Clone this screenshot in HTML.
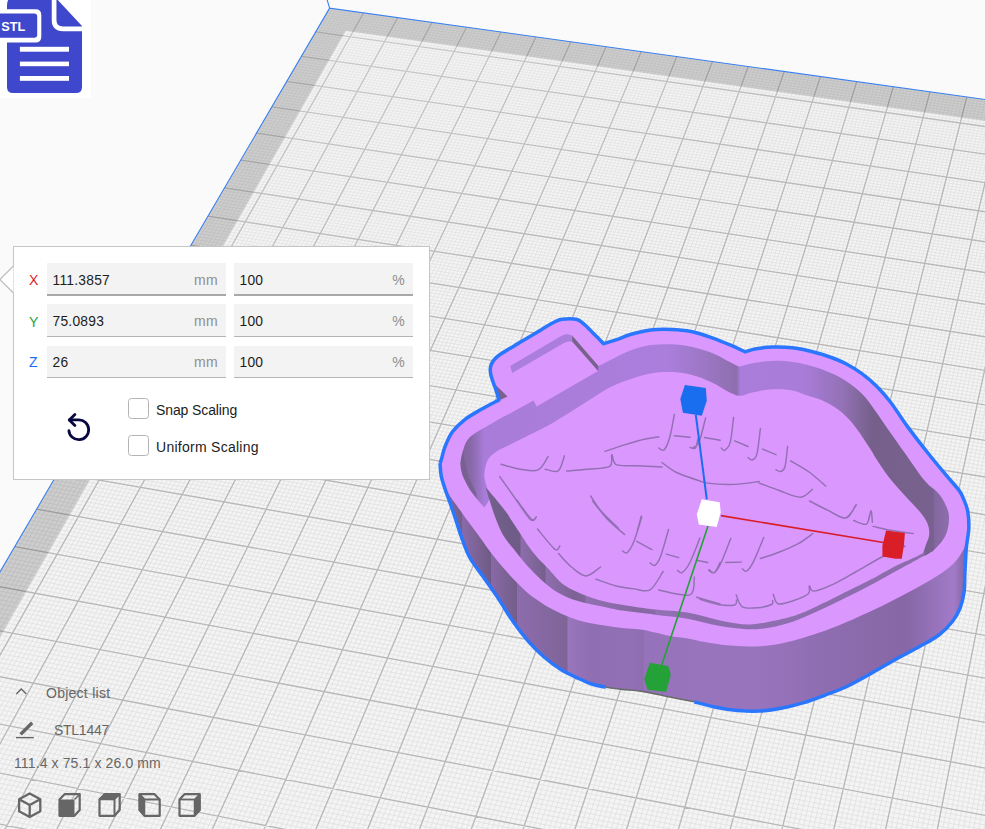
<!DOCTYPE html>
<html><head><meta charset="utf-8"><title>Scale tool</title>
<style>
*{box-sizing:border-box;margin:0;padding:0}
html,body{width:985px;height:829px;overflow:hidden;background:#fafafa}
body{position:relative;font-family:"Liberation Sans","DejaVu Sans",sans-serif;font-size:14px;color:#191919}
#scene{position:absolute;left:0;top:0}
#stl{position:absolute;left:0;top:0;width:91px;height:98px;background:#fff}
#panel{position:absolute;left:13px;top:246px;width:417px;height:234px;background:#fff;border:1px solid #c4c5c6}
#arrow{position:absolute;left:-1px;top:265px;z-index:2}
.fld{position:absolute;height:33px;background:#f3f3f3;border-bottom:1px solid #b4b4b4}
.fld.a{border-bottom:2px solid #a8a8a8}
.fld .v{position:absolute;left:5.5px;top:10px;font-size:13.8px;line-height:16px;letter-spacing:.25px;color:#1c1c1c}
.fld .u{position:absolute;right:8px;top:9px;line-height:16px;color:#8f8f8f;letter-spacing:.3px}
.ax{position:absolute;left:15px;line-height:16px;font-size:14px}
.cb{position:absolute;left:114px;width:21px;height:21px;border:1px solid #b4b4b4;border-radius:3.5px;background:#fff}
.cl{position:absolute;left:142px;line-height:16px;letter-spacing:.12px;color:#1c1c1c}
.sc{position:absolute;color:#666;line-height:16px;white-space:nowrap}
</style></head><body>
<svg id="scene" width="985" height="829" viewBox="0 0 985 829">
<defs><linearGradient id="gFade" gradientUnits="userSpaceOnUse" x1="0" y1="0" x2="120" y2="420"><stop offset="0" stop-color="#f4f4f4" stop-opacity="0.38"/><stop offset="1" stop-color="#f4f4f4" stop-opacity="0"/></linearGradient></defs>
<path d="M329.6 8.1L1424.1 160.8L1382.9 1486.8L-311 1103.8Z" fill="#f4f4f4"/>
<path d="M333 8.6L-305.9 1105M336.4 9.1L-300.9 1106.1M339.8 9.5L-295.9 1107.2M343.2 10L-290.8 1108.4M346.6 10.5L-285.8 1109.5M350 11L-280.8 1110.7M353.4 11.4L-275.7 1111.8M356.8 11.9L-270.7 1112.9M360.2 12.4L-265.6 1114.1M367 13.3L-255.5 1116.4M370.4 13.8L-250.4 1117.5M373.8 14.3L-245.3 1118.7M377.2 14.8L-240.3 1119.8M380.7 15.2L-235.2 1121M384.1 15.7L-230.1 1122.1M387.5 16.2L-225 1123.3M390.9 16.7L-219.9 1124.4M394.3 17.1L-214.8 1125.6M401.2 18.1L-204.6 1127.9M404.6 18.6L-199.5 1129M408 19.1L-194.4 1130.2M411.4 19.5L-189.3 1131.3M414.9 20L-184.2 1132.5M418.3 20.5L-179.1 1133.6M421.7 21L-173.9 1134.8M425.2 21.4L-168.8 1136M428.6 21.9L-163.7 1137.1M435.5 22.9L-153.4 1139.4M438.9 23.4L-148.3 1140.6M442.4 23.8L-143.1 1141.8M445.8 24.3L-138 1142.9M449.3 24.8L-132.8 1144.1M452.7 25.3L-127.7 1145.3M456.2 25.8L-122.5 1146.4M459.6 26.2L-117.3 1147.6M463.1 26.7L-112.2 1148.8M470 27.7L-101.8 1151.1M473.4 28.2L-96.6 1152.3M476.9 28.7L-91.5 1153.5M480.3 29.1L-86.3 1154.6M483.8 29.6L-81.1 1155.8M487.3 30.1L-75.9 1157M490.7 30.6L-70.7 1158.1M494.2 31.1L-65.5 1159.3M497.7 31.6L-60.3 1160.5M504.6 32.5L-49.8 1162.9M508.1 33L-44.6 1164M511.6 33.5L-39.4 1165.2M515 34L-34.2 1166.4M518.5 34.5L-28.9 1167.6M522 34.9L-23.7 1168.8M525.5 35.4L-18.5 1170M529 35.9L-13.2 1171.1M532.4 36.4L-8 1172.3M539.4 37.4L2.5 1174.7M542.9 37.9L7.8 1175.9M546.4 38.4L13.1 1177.1M549.9 38.8L18.3 1178.3M553.4 39.3L23.6 1179.5M556.9 39.8L28.9 1180.7M560.4 40.3L34.2 1181.9M563.9 40.8L39.4 1183M567.4 41.3L44.7 1184.2M574.4 42.3L55.3 1186.6M577.9 42.7L60.6 1187.8M581.4 43.2L65.9 1189M584.9 43.7L71.2 1190.2M588.4 44.2L76.5 1191.4M591.9 44.7L81.9 1192.6M595.5 45.2L87.2 1193.8M599 45.7L92.5 1195M602.5 46.2L97.8 1196.2M609.5 47.2L108.5 1198.7M613.1 47.7L113.8 1199.9M616.6 48.1L119.2 1201.1M620.1 48.6L124.5 1202.3M623.6 49.1L129.9 1203.5M627.2 49.6L135.2 1204.7M630.7 50.1L140.6 1205.9M634.2 50.6L145.9 1207.1M637.8 51.1L151.3 1208.3M644.9 52.1L162.1 1210.8M648.4 52.6L167.4 1212M651.9 53.1L172.8 1213.2M655.5 53.6L178.2 1214.4M659 54.1L183.6 1215.6M662.6 54.6L189 1216.9M666.1 55.1L194.4 1218.1M669.7 55.6L199.8 1219.3M673.2 56L205.2 1220.5M680.3 57L216 1223M683.9 57.5L221.5 1224.2M687.5 58L226.9 1225.4M691 58.5L232.3 1226.6M694.6 59L237.8 1227.9M698.1 59.5L243.2 1229.1M701.7 60L248.6 1230.3M705.3 60.5L254.1 1231.6M708.8 61L259.5 1232.8M716 62L270.4 1235.3M719.6 62.5L275.9 1236.5M723.1 63L281.4 1237.7M726.7 63.5L286.8 1239M730.3 64L292.3 1240.2M733.9 64.5L297.8 1241.5M737.5 65L303.3 1242.7M741.1 65.5L308.8 1243.9M744.6 66L314.3 1245.2M751.8 67L325.3 1247.7M755.4 67.5L330.8 1248.9M759 68L336.3 1250.2M762.6 68.5L341.8 1251.4M766.2 69L347.3 1252.6M769.8 69.5L352.8 1253.9M773.4 70L358.3 1255.1M777 70.5L363.9 1256.4M780.6 71L369.4 1257.6M787.8 72L380.5 1260.1M791.4 72.5L386 1261.4M795.1 73L391.6 1262.7M798.7 73.5L397.1 1263.9M802.3 74L402.7 1265.2M805.9 74.6L408.3 1266.4M809.5 75.1L413.8 1267.7M813.1 75.6L419.4 1268.9M816.8 76.1L425 1270.2M824 77.1L436.2 1272.7M827.6 77.6L441.7 1274M831.3 78.1L447.3 1275.3M834.9 78.6L452.9 1276.5M838.5 79.1L458.5 1277.8M842.2 79.6L464.1 1279.1M845.8 80.1L469.8 1280.3M849.5 80.6L475.4 1281.6M853.1 81.1L481 1282.9M860.4 82.2L492.3 1285.4M864 82.7L497.9 1286.7M867.7 83.2L503.5 1288M871.3 83.7L509.2 1289.2M875 84.2L514.8 1290.5M878.6 84.7L520.5 1291.8M882.3 85.2L526.1 1293.1M885.9 85.7L531.8 1294.4M889.6 86.2L537.4 1295.6M896.9 87.3L548.8 1298.2M900.6 87.8L554.5 1299.5M904.2 88.3L560.1 1300.8M907.9 88.8L565.8 1302M911.6 89.3L571.5 1303.3M915.3 89.8L577.2 1304.6M918.9 90.3L582.9 1305.9M922.6 90.8L588.6 1307.2M926.3 91.3L594.3 1308.5M933.6 92.4L605.8 1311.1M937.3 92.9L611.5 1312.4M941 93.4L617.2 1313.7M944.7 93.9L622.9 1315M948.4 94.4L628.7 1316.3M952.1 94.9L634.4 1317.6M955.8 95.5L640.2 1318.9M959.5 96L645.9 1320.2M963.1 96.5L651.7 1321.5M970.5 97.5L663.2 1324.1M974.2 98L669 1325.4M977.9 98.6L674.7 1326.7M981.6 99.1L680.5 1328M985.4 99.6L686.3 1329.3M989.1 100.1L692.1 1330.6M992.8 100.6L697.9 1331.9M996.5 101.1L703.7 1333.2M1000.2 101.7L709.5 1334.5M1007.6 102.7L721.1 1337.1M1011.3 103.2L726.9 1338.5M1015.1 103.7L732.7 1339.8M1018.8 104.3L738.5 1341.1M1022.5 104.8L744.3 1342.4M1026.2 105.3L750.2 1343.7M1030 105.8L756 1345M1033.7 106.3L761.9 1346.4M1037.4 106.9L767.7 1347.7M1044.9 107.9L779.4 1350.3M1048.6 108.4L785.3 1351.7M1052.4 108.9L791.1 1353M1056.1 109.5L797 1354.3M1059.9 110L802.9 1355.6M1063.6 110.5L808.7 1357M1067.3 111L814.6 1358.3M1071.1 111.5L820.5 1359.6M1074.8 112.1L826.4 1361M1082.3 113.1L838.2 1363.6M1086.1 113.6L844.1 1365M1089.9 114.2L850 1366.3M1093.6 114.7L855.9 1367.6M1097.4 115.2L861.9 1369M1101.1 115.7L867.8 1370.3M1104.9 116.3L873.7 1371.7M1108.7 116.8L879.6 1373M1112.4 117.3L885.6 1374.3M1120 118.4L897.5 1377M1123.8 118.9L903.4 1378.4M1127.5 119.4L909.4 1379.7M1131.3 119.9L915.4 1381.1M1135.1 120.5L921.3 1382.4M1138.9 121L927.3 1383.8M1142.7 121.5L933.3 1385.1M1146.5 122.1L939.3 1386.5M1150.2 122.6L945.2 1387.8M1157.8 123.6L957.2 1390.5M1161.6 124.2L963.2 1391.9M1165.4 124.7L969.2 1393.3M1169.2 125.2L975.2 1394.6M1173 125.8L981.3 1396M1176.8 126.3L987.3 1397.3M1180.6 126.8L993.3 1398.7M1184.4 127.4L999.3 1400.1M1188.2 127.9L1005.4 1401.4M1195.8 128.9L1017.5 1404.2M1199.7 129.5L1023.5 1405.5M1203.5 130L1029.6 1406.9M1207.3 130.5L1035.6 1408.3M1211.1 131.1L1041.7 1409.6M1214.9 131.6L1047.8 1411M1218.7 132.1L1053.8 1412.4M1222.6 132.7L1059.9 1413.7M1226.4 133.2L1066 1415.1M1234 134.3L1078.2 1417.9M1237.9 134.8L1084.3 1419.3M1241.7 135.3L1090.4 1420.6M1245.6 135.9L1096.5 1422M1249.4 136.4L1102.6 1423.4M1253.2 137L1108.7 1424.8M1257.1 137.5L1114.8 1426.2M1260.9 138L1121 1427.6M1264.8 138.6L1127.1 1428.9M1272.5 139.6L1139.4 1431.7M1276.3 140.2L1145.5 1433.1M1280.2 140.7L1151.7 1434.5M1284 141.2L1157.8 1435.9M1287.9 141.8L1164 1437.3M1291.7 142.3L1170.2 1438.7M1295.6 142.9L1176.3 1440.1M1299.5 143.4L1182.5 1441.5M1303.3 143.9L1188.7 1442.9M1311.1 145L1201.1 1445.7M1314.9 145.6L1207.3 1447.1M1318.8 146.1L1213.5 1448.5M1322.7 146.6L1219.7 1449.9M1326.5 147.2L1225.9 1451.3M1330.4 147.7L1232.1 1452.7M1334.3 148.3L1238.4 1454.1M1338.2 148.8L1244.6 1455.5M1342.1 149.3L1250.8 1456.9M1349.8 150.4L1263.3 1459.7M1353.7 151L1269.6 1461.1M1357.6 151.5L1275.8 1462.6M1361.5 152.1L1282.1 1464M1365.4 152.6L1288.3 1465.4M1369.3 153.1L1294.6 1466.8M1373.2 153.7L1300.9 1468.2M1377.1 154.2L1307.2 1469.6M1381 154.8L1313.4 1471.1M1388.8 155.9L1326 1473.9M1392.7 156.4L1332.3 1475.3M1396.7 157L1338.6 1476.8M1400.6 157.5L1344.9 1478.2M1404.5 158.1L1351.3 1479.6M1408.4 158.6L1357.6 1481M1412.3 159.1L1363.9 1482.5M1416.2 159.7L1370.2 1483.9M1420.2 160.2L1376.6 1485.3M328.3 10.5L1424 163.5M326.9 12.8L1423.9 166.3M325.5 15.2L1423.8 169M324.1 17.6L1423.8 171.8M322.7 20L1423.7 174.5M321.3 22.3L1423.6 177.3M319.9 24.7L1423.5 180.1M318.5 27.1L1423.4 182.8M317.1 29.5L1423.3 185.6M314.3 34.3L1423.1 191.2M312.9 36.8L1423.1 194M311.5 39.2L1423 196.9M310.1 41.6L1422.9 199.7M308.6 44.1L1422.8 202.5M307.2 46.5L1422.7 205.3M305.8 49L1422.6 208.2M304.3 51.4L1422.5 211.1M302.9 53.9L1422.4 213.9M300 58.8L1422.3 219.7M298.6 61.3L1422.2 222.5M297.1 63.8L1422.1 225.4M295.6 66.3L1422 228.3M294.2 68.8L1421.9 231.2M292.7 71.3L1421.8 234.2M291.3 73.8L1421.7 237.1M289.8 76.3L1421.6 240M288.3 78.8L1421.5 242.9M285.4 83.9L1421.4 248.8M283.9 86.4L1421.3 251.8M282.4 88.9L1421.2 254.8M280.9 91.5L1421.1 257.8M279.4 94.1L1421 260.7M277.9 96.6L1420.9 263.7M276.4 99.2L1420.8 266.7M274.9 101.8L1420.7 269.7M273.4 104.4L1420.6 272.8M270.3 109.5L1420.4 278.8M268.8 112.1L1420.3 281.9M267.3 114.8L1420.2 284.9M265.8 117.4L1420.1 288M264.2 120L1420.1 291M262.7 122.6L1420 294.1M261.2 125.3L1419.9 297.2M259.6 127.9L1419.8 300.3M258.1 130.6L1419.7 303.4M254.9 135.9L1419.5 309.6M253.4 138.5L1419.4 312.7M251.8 141.2L1419.3 315.9M250.3 143.9L1419.2 319M248.7 146.6L1419.1 322.2M247.1 149.3L1419 325.3M245.5 152L1418.9 328.5M243.9 154.7L1418.8 331.7M242.4 157.4L1418.7 334.9M239.2 162.9L1418.5 341.3M237.6 165.6L1418.4 344.5M236 168.4L1418.3 347.7M234.3 171.1L1418.2 350.9M232.7 173.9L1418.1 354.2M231.1 176.6L1418 357.4M229.5 179.4L1417.9 360.7M227.9 182.2L1417.8 363.9M226.2 185L1417.7 367.2M223 190.6L1417.5 373.8M221.3 193.4L1417.4 377.1M219.7 196.2L1417.3 380.4M218 199L1417.2 383.7M216.4 201.9L1417.1 387.1M214.7 204.7L1417 390.4M213 207.5L1416.9 393.7M211.4 210.4L1416.8 397.1M209.7 213.3L1416.7 400.5M206.3 219L1416.4 407.2M204.7 221.9L1416.3 410.6M203 224.8L1416.2 414M201.3 227.7L1416.1 417.5M199.6 230.6L1416 420.9M197.9 233.5L1415.9 424.3M196.2 236.4L1415.8 427.8M194.4 239.4L1415.7 431.2M192.7 242.3L1415.6 434.7M189.3 248.2L1415.4 441.7M187.6 251.1L1415.3 445.2M185.8 254.1L1415.2 448.7M184.1 257.1L1415 452.2M182.3 260.1L1414.9 455.7M180.6 263.1L1414.8 459.2M178.8 266.1L1414.7 462.8M177.1 269.1L1414.6 466.4M175.3 272.1L1414.5 469.9M171.8 278.2L1414.3 477.1M170 281.2L1414.2 480.7M168.2 284.2L1414 484.3M166.4 287.3L1413.9 487.9M164.6 290.4L1413.8 491.6M162.8 293.4L1413.7 495.2M161 296.5L1413.6 498.9M159.2 299.6L1413.5 502.5M157.4 302.7L1413.4 506.2M153.8 308.9L1413.1 513.6M151.9 312.1L1413 517.3M150.1 315.2L1412.9 521M148.3 318.3L1412.8 524.7M146.4 321.5L1412.7 528.5M144.6 324.7L1412.6 532.2M142.7 327.8L1412.4 536M140.9 331L1412.3 539.8M139 334.2L1412.2 543.6M135.3 340.6L1412 551.2M133.4 343.8L1411.9 555M131.5 347L1411.7 558.8M129.6 350.2L1411.6 562.7M127.7 353.5L1411.5 566.5M125.8 356.7L1411.4 570.4M123.9 360L1411.3 574.3M122 363.3L1411.1 578.2M120.1 366.5L1411 582.1M116.2 373.1L1410.8 589.9M114.3 376.4L1410.6 593.8M112.4 379.7L1410.5 597.8M110.4 383L1410.4 601.8M108.5 386.4L1410.3 605.7M106.5 389.7L1410.2 609.7M104.6 393.1L1410 613.7M102.6 396.4L1409.9 617.7M100.6 399.8L1409.8 621.8M96.7 406.6L1409.5 629.8M94.7 410L1409.4 633.9M92.7 413.4L1409.3 638M90.7 416.8L1409.2 642.1M88.7 420.2L1409 646.2M86.7 423.6L1408.9 650.3M84.7 427.1L1408.8 654.4M82.7 430.6L1408.6 658.5M80.6 434L1408.5 662.7M76.6 441L1408.3 671M74.5 444.5L1408.1 675.2M72.5 448L1408 679.4M70.4 451.5L1407.9 683.7M68.4 455L1407.7 687.9M66.3 458.6L1407.6 692.1M64.2 462.1L1407.5 696.4M62.1 465.7L1407.3 700.7M60 469.2L1407.2 705M55.9 476.4L1406.9 713.6M53.7 480L1406.8 717.9M51.6 483.6L1406.7 722.2M49.5 487.2L1406.5 726.6M47.4 490.9L1406.4 731M45.3 494.5L1406.3 735.4M43.1 498.2L1406.1 739.7M41 501.8L1406 744.2M38.8 505.5L1405.8 748.6M34.5 512.9L1405.6 757.5M32.4 516.6L1405.4 762M30.2 520.3L1405.3 766.4M28 524L1405.1 770.9M25.8 527.8L1405 775.5M23.6 531.5L1404.9 780M21.4 535.3L1404.7 784.5M19.2 539.1L1404.6 789.1M17 542.9L1404.4 793.7M12.5 550.5L1404.2 802.9M10.3 554.3L1404 807.5M8.1 558.1L1403.9 812.1M5.8 562L1403.7 816.8M3.6 565.8L1403.6 821.4M1.3 569.7L1403.4 826.1M-1 573.6L1403.3 830.8M-3.2 577.5L1403.1 835.5M-5.5 581.4L1403 840.3M-10.1 589.2L1402.7 849.8M-12.4 593.1L1402.6 854.5M-14.7 597.1L1402.4 859.3M-17 601.1L1402.3 864.1M-19.4 605L1402.1 869M-21.7 609L1402 873.8M-24 613L1401.8 878.7M-26.4 617L1401.7 883.5M-28.7 621.1L1401.5 888.4M-33.4 629.1L1401.2 898.3M-35.8 633.2L1401 903.2M-38.2 637.3L1400.9 908.2M-40.6 641.4L1400.7 913.2M-43 645.5L1400.6 918.2M-45.4 649.6L1400.4 923.2M-47.8 653.7L1400.3 928.2M-50.2 657.9L1400.1 933.2M-52.7 662L1400 938.3M-57.5 670.3L1399.6 948.5M-60 674.5L1399.5 953.6M-62.4 678.7L1399.3 958.7M-64.9 683L1399.2 963.9M-67.4 687.2L1399 969.1M-69.9 691.4L1398.8 974.3M-72.4 695.7L1398.7 979.5M-74.9 700L1398.5 984.7M-77.4 704.3L1398.3 989.9M-82.4 712.9L1398 1000.5M-84.9 717.2L1397.9 1005.8M-87.5 721.5L1397.7 1011.1M-90 725.9L1397.5 1016.4M-92.6 730.3L1397.4 1021.8M-95.1 734.7L1397.2 1027.2M-97.7 739.1L1397 1032.6M-100.3 743.5L1396.9 1038M-102.9 747.9L1396.7 1043.4M-108.1 756.8L1396.3 1054.3M-110.7 761.3L1396.2 1059.8M-113.3 765.7L1396 1065.4M-115.9 770.2L1395.8 1070.9M-118.6 774.8L1395.7 1076.4M-121.2 779.3L1395.5 1082M-123.9 783.8L1395.3 1087.6M-126.5 788.4L1395.1 1093.2M-129.2 793L1395 1098.9M-134.6 802.2L1394.6 1110.2M-137.3 806.8L1394.4 1115.9M-140 811.4L1394.3 1121.6M-142.7 816.1L1394.1 1127.4M-145.5 820.7L1393.9 1133.1M-148.2 825.4L1393.7 1138.9M-150.9 830.1L1393.5 1144.7M-153.7 834.8L1393.4 1150.5M-156.5 839.6L1393.2 1156.4M-162 849.1L1392.8 1168.2M-164.8 853.8L1392.6 1174.1M-167.6 858.6L1392.4 1180M-170.4 863.4L1392.3 1186M-173.2 868.3L1392.1 1192M-176.1 873.1L1391.9 1198M-178.9 878L1391.7 1204M-181.8 882.8L1391.5 1210M-184.6 887.7L1391.3 1216.1M-190.4 897.6L1390.9 1228.3M-193.3 902.5L1390.8 1234.5M-196.2 907.5L1390.6 1240.6M-199.1 912.5L1390.4 1246.8M-202 917.4L1390.2 1253.1M-204.9 922.5L1390 1259.3M-207.9 927.5L1389.8 1265.6M-210.8 932.5L1389.6 1271.8M-213.8 937.6L1389.4 1278.2M-219.7 947.8L1389 1290.9M-222.7 952.9L1388.8 1297.2M-225.7 958L1388.6 1303.7M-228.7 963.2L1388.4 1310.1M-231.8 968.4L1388.2 1316.5M-234.8 973.5L1388 1323M-237.8 978.8L1387.8 1329.5M-240.9 984L1387.6 1336.1M-244 989.2L1387.4 1342.7M-250.1 999.8L1387 1355.9M-253.2 1005.1L1386.8 1362.5M-256.3 1010.4L1386.6 1369.2M-259.5 1015.7L1386.4 1375.9M-262.6 1021.1L1386.2 1382.6M-265.7 1026.5L1385.9 1389.3M-268.9 1031.9L1385.7 1396.1M-272.1 1037.3L1385.5 1402.9M-275.2 1042.7L1385.3 1409.8M-281.6 1053.6L1384.9 1423.5M-284.8 1059.1L1384.7 1430.4M-288.1 1064.7L1384.5 1437.4M-291.3 1070.2L1384.2 1444.3M-294.6 1075.7L1384 1451.3M-297.8 1081.3L1383.8 1458.4M-301.1 1086.9L1383.6 1465.4M-304.4 1092.5L1383.4 1472.5M-307.7 1098.2L1383.1 1479.6" stroke="#e2e2e2" stroke-width="0.85" fill="none"/>
<path d="M363.6 12.9L-260.5 1115.2M397.7 17.6L-209.7 1126.7M432 22.4L-158.6 1138.3M466.5 27.2L-107 1149.9M501.1 32L-55 1161.7M535.9 36.9L-2.7 1173.5M570.9 41.8L50 1185.4M606 46.7L103.2 1197.4M641.3 51.6L156.7 1209.6M676.8 56.5L210.6 1221.7M712.4 61.5L265 1234M748.2 66.5L319.8 1246.4M784.2 71.5L374.9 1258.9M820.4 76.6L430.6 1271.5M856.7 81.6L486.6 1284.1M893.3 86.7L543.1 1296.9M930 91.9L600 1309.8M966.8 97L657.4 1322.8M1003.9 102.2L715.3 1335.8M1041.2 107.4L773.6 1349M1078.6 112.6L832.3 1362.3M1116.2 117.8L891.5 1375.7M1154 123.1L951.2 1389.2M1192 128.4L1011.4 1402.8M1230.2 133.7L1072.1 1416.5M1268.6 139.1L1133.2 1430.3M1307.2 144.5L1194.9 1444.3M1346 149.9L1257.1 1458.3M1384.9 155.3L1319.7 1472.5M1424.1 160.8L1382.9 1486.8M315.7 31.9L1423.2 188.4M301.5 56.3L1422.4 216.8M286.8 81.3L1421.5 245.9M271.9 106.9L1420.5 275.8M256.5 133.2L1419.6 306.5M240.8 160.1L1418.6 338M224.6 187.8L1417.6 370.5M208 216.1L1416.5 403.8M191 245.2L1415.5 438.2M173.5 275.1L1414.4 473.5M155.6 305.8L1413.3 509.9M137.1 337.4L1412.1 547.4M118.2 369.8L1410.9 586M98.7 403.2L1409.7 625.8M78.6 437.5L1408.4 666.9M57.9 472.8L1407.1 709.3M36.7 509.2L1405.7 753M14.8 546.7L1404.3 798.3M-7.8 585.3L1402.8 845M-31.1 625.1L1401.3 893.4M-55.1 666.2L1399.8 943.4M-79.9 708.6L1398.2 995.2M-105.5 752.3L1396.5 1048.9M-131.9 797.6L1394.8 1104.5M-159.2 844.3L1393 1162.3M-187.5 892.6L1391.1 1222.2M-216.8 942.7L1389.2 1284.5M-247 994.5L1387.2 1349.2M-278.4 1048.2L1385.1 1416.6M-311 1103.8L1382.9 1486.8" stroke="#b8b8b8" stroke-width="1.35" fill="none"/>
<path d="M329.6 8.1L1424.1 160.8L1382.9 1486.8L-311 1103.8Z" fill="url(#gFade)"/>
<path d="M329.6 8.1L1424.1 160.8L1423.4 182.6L345.7 30.7L-271.2 1112.8L-311 1103.8Z" fill="#000" fill-opacity="0.155"/>
<path d="M-311 1103.8L329.6 8.1L1424.1 160.8M329.6 8.1L327.2 0" stroke="#3a80f0" stroke-width="1.1" fill="none"/>
<defs>
<linearGradient id="gOut" gradientUnits="userSpaceOnUse" x1="440" y1="0" x2="970" y2="0">
<stop offset="0.0000" stop-color="#8566a2"/><stop offset="0.0415" stop-color="#75608b"/><stop offset="0.0425" stop-color="#8a6aa9"/><stop offset="0.0962" stop-color="#6f5b85"/><stop offset="0.0972" stop-color="#8869a6"/><stop offset="0.1453" stop-color="#735e89"/><stop offset="0.1462" stop-color="#8d6cad"/><stop offset="0.2396" stop-color="#7e6497"/><stop offset="0.2415" stop-color="#9a76bd"/><stop offset="0.2830" stop-color="#906eb2"/><stop offset="0.3585" stop-color="#9370b6"/><stop offset="0.3830" stop-color="#8e6daf"/><stop offset="0.3858" stop-color="#9672ba"/><stop offset="0.4906" stop-color="#9874bc"/><stop offset="0.6000" stop-color="#9874bc"/><stop offset="0.6792" stop-color="#9370b6"/><stop offset="0.7208" stop-color="#8f6db1"/><stop offset="0.8000" stop-color="#8b6aab"/><stop offset="0.8792" stop-color="#8767a5"/><stop offset="0.9302" stop-color="#9672ba"/><stop offset="0.9698" stop-color="#a27bc8"/><stop offset="0.9849" stop-color="#8d6cad"/><stop offset="1.0000" stop-color="#8a69aa"/>
</linearGradient>
<linearGradient id="gFar" gradientUnits="userSpaceOnUse" x1="460" y1="0" x2="950" y2="0">
<stop offset="0" stop-color="#7d6296"/><stop offset="0.025" stop-color="#8a6aab"/><stop offset="0.05" stop-color="#a97cda"/><stop offset="0.42" stop-color="#ab7edd"/><stop offset="0.50" stop-color="#9c77c4"/>
<stop offset="0.565" stop-color="#8e6eae"/><stop offset="0.572" stop-color="#aa7ddb"/><stop offset="0.70" stop-color="#a97cda"/><stop offset="0.78" stop-color="#9372b6"/><stop offset="0.84" stop-color="#76608b"/>
<stop offset="0.966" stop-color="#78618e"/><stop offset="0.969" stop-color="#8468a0"/><stop offset="1" stop-color="#8d6ead"/>
</linearGradient>
<linearGradient id="gNear" gradientUnits="userSpaceOnUse" x1="485" y1="0" x2="930" y2="0">
<stop offset="0.0000" stop-color="#7a6292"/><stop offset="0.0225" stop-color="#70608a"/><stop offset="0.0787" stop-color="#6f5b85"/><stop offset="0.0809" stop-color="#8e6dae"/><stop offset="0.1348" stop-color="#75608c"/><stop offset="0.1371" stop-color="#8e6dae"/><stop offset="0.2022" stop-color="#7c6394"/><stop offset="0.2247" stop-color="#80659a"/><stop offset="0.2270" stop-color="#9170b2"/><stop offset="0.3483" stop-color="#8567a1"/><stop offset="0.3820" stop-color="#8a6aa8"/><stop offset="0.3843" stop-color="#9371b5"/><stop offset="0.4831" stop-color="#8d6cad"/><stop offset="0.6180" stop-color="#8f6eb0"/><stop offset="1.0000" stop-color="#8d6cad"/>
</linearGradient>
</defs>
<path d="M440 463C440.2 462.5 440.3 462.8 441.2 460C442.1 457.2 443.3 450.9 445.2 446.2C447.1 441.5 449.1 436.4 452.3 432C455.5 427.6 459.8 423.5 464.5 419.8C469.2 416.1 475.1 412.9 480.8 409.6C486.6 406.3 496 401.5 499 399.9C498.3 397.8 496.4 391.4 495 387.3C493.6 383.2 491.6 378.5 490.9 375.1C490.1 371.7 490 369.5 490.5 367C491 364.5 492.2 362.1 494 359.9C495.8 357.7 496.5 356.9 501.1 353.8C505.7 350.8 514.6 345.7 521.4 341.6C528.2 337.5 536.3 332.6 541.7 329.4C547.1 326.2 550.5 324 553.9 322.3C557.3 320.6 558.3 319.8 562 319.3C565.7 318.8 572.5 318.5 576.2 319.3C579.9 320.1 581.2 321.9 584.3 324.4C587.3 326.9 591.3 331.3 594.5 334.5C597.7 337.7 602.1 342.2 603.6 343.7C605.8 343 612.3 341.1 616.8 339.6C621.2 338.1 624.7 336.1 630.3 334.5C635.9 332.9 643.8 330.9 650.6 330C657.4 329.1 664.1 329.1 670.9 329.4C677.7 329.6 684.4 330.1 691.2 331.5C698 332.9 704.7 335.2 711.5 337.6C718.3 340 726.2 343.3 731.8 345.7C737.4 348.1 742.8 350.8 745 351.8C746.9 351.3 751.6 349.5 756.2 348.7C760.8 347.9 766.3 347.3 772.4 347.1C778.5 346.9 787.2 347.2 792.7 347.7C798.2 348.2 799.8 348.7 805.3 350C810.8 351.3 818.8 353.2 825.6 355.5C832.4 357.8 839.8 360.6 845.9 363.7C852 366.8 857.1 370.1 862.2 373.8C867.3 377.5 871.7 381.3 876.4 386C881.1 390.7 885.5 395.6 890.6 402.2C895.7 408.8 900.7 417.3 906.8 425.6C912.9 433.9 920.5 443.7 927.1 452C933.7 460.3 940.8 468.8 946.1 475.2C951.4 481.6 956.1 486.3 959.1 490.4C962.1 494.5 962.5 496.5 964 500C965.5 503.5 967 506.8 967.8 511.6C968.6 516.4 969 522.8 968.8 528.9C968.5 535 966.9 540.8 966.3 548.2C965.6 555.6 965.3 565.9 964.9 573.3C964.5 580.7 964.8 586.8 964 592.6C963.2 598.4 962 603.2 960.1 608C958.2 612.8 955.9 617 952.4 621.5C948.9 626 944.4 630.8 938.9 635C933.4 639.2 927 642.4 919.6 646.6C912.2 650.8 902.8 655.4 894.5 660C886.2 664.6 878.3 669.4 870 674C861.7 678.6 852.3 684 844.7 687.5C837.1 691 831.6 692.7 824.6 695.3C817.6 697.9 810.1 700.7 802.9 702.9C795.6 705.1 788.4 706.9 781.1 708.3C773.9 709.7 766.6 710.7 759.4 711.1C752.2 711.5 744.9 711.1 737.7 710.5C730.5 709.9 723.2 708.7 716 707.2C708.8 705.8 702 703.5 694.3 701.8C686.6 700.1 678.4 698.7 670 697C661.6 695.3 651.7 692.9 643.7 691.6C635.7 690.3 628.3 690.1 622 689.4C615.7 688.7 610.8 688.1 605.7 687.2C600.6 686.3 596.1 685.5 591.6 684C587.1 682.5 583.7 680.9 578.6 678.5C573.5 676.1 567 673.4 561.2 669.8C555.4 666.2 549.2 661.5 543.8 656.8C538.4 652.1 533.7 647.4 528.6 641.6C523.5 635.8 518.5 629.3 513.4 622.1C508.3 614.9 503.3 605.8 498.2 598.2C493.1 590.6 487.7 583.2 483 576.5C478.3 569.8 473.4 564.1 470 558C466.6 551.9 464.9 546.3 462.5 540C460.1 533.7 457.9 526.2 455.9 520.2C453.9 514.2 452.4 509.4 450.6 504.3C448.8 499.2 446.9 494.4 445.3 489.7C443.8 485 442.2 480.8 441.3 476.4C440.4 471.9 440.2 465.2 440 463Z" fill="url(#gOut)"/>
<path d="M440 463C440.2 462.5 440.3 462.8 441.2 460C442.1 457.2 443.3 450.9 445.2 446.2C447.1 441.5 449.1 436.4 452.3 432C455.5 427.6 459.8 423.5 464.5 419.8C469.2 416.1 475.1 412.9 480.8 409.6C486.6 406.3 496 401.5 499 399.9C498.3 397.8 496.4 391.4 495 387.3C493.6 383.2 491.6 378.5 490.9 375.1C490.1 371.7 490 369.5 490.5 367C491 364.5 492.2 362.1 494 359.9C495.8 357.7 496.5 356.9 501.1 353.8C505.7 350.8 514.6 345.7 521.4 341.6C528.2 337.5 536.3 332.6 541.7 329.4C547.1 326.2 550.5 324 553.9 322.3C557.3 320.6 558.3 319.8 562 319.3C565.7 318.8 572.5 318.5 576.2 319.3C579.9 320.1 581.2 321.9 584.3 324.4C587.3 326.9 591.3 331.3 594.5 334.5C597.7 337.7 602.1 342.2 603.6 343.7C605.8 343 612.3 341.1 616.8 339.6C621.2 338.1 624.7 336.1 630.3 334.5C635.9 332.9 643.8 330.9 650.6 330C657.4 329.1 664.1 329.1 670.9 329.4C677.7 329.6 684.4 330.1 691.2 331.5C698 332.9 704.7 335.2 711.5 337.6C718.3 340 726.2 343.3 731.8 345.7C737.4 348.1 742.8 350.8 745 351.8C746.9 351.3 751.6 349.5 756.2 348.7C760.8 347.9 766.3 347.3 772.4 347.1C778.5 346.9 787.2 347.2 792.7 347.7C798.2 348.2 799.8 348.7 805.3 350C810.8 351.3 818.8 353.2 825.6 355.5C832.4 357.8 839.8 360.6 845.9 363.7C852 366.8 857.1 370.1 862.2 373.8C867.3 377.5 871.7 381.3 876.4 386C881.1 390.7 885.5 395.6 890.6 402.2C895.7 408.8 900.7 417.3 906.8 425.6C912.9 433.9 920.5 443.7 927.1 452C933.7 460.3 940.8 468.8 946.1 475.2C951.4 481.6 956.1 486.3 959.1 490.4C962.1 494.5 962.5 496.5 964 500C965.5 503.5 967 506.8 967.8 511.6C968.6 516.4 968.8 525.2 968.8 528.9C968.8 532.6 968 533.1 967.8 534C967.3 536 966.5 542.3 964.9 546.3C963.3 550.3 961.2 554 958.2 557.9C955.2 561.8 952.1 565.2 946.6 569.4C941.1 573.6 933.8 578.1 925.4 582.9C917 587.7 906.1 593.4 896.5 598.4C886.9 603.4 877.1 608.3 867.5 612.8C857.9 617.3 847.6 621.8 838.6 625.4C829.6 629 821.5 631.9 813.7 634.5C805.9 637.1 799.2 639.2 792 641C784.8 642.8 777.5 644.4 770.3 645.3C763.1 646.2 755.8 646.4 748.6 646.4C741.4 646.4 734.3 646 727 645.3C719.7 644.6 711.6 643.1 705 642C698.4 640.9 693.3 639.5 687.5 638.5C681.7 637.5 675.4 637 670 636C664.6 635 660 633.6 655 632.5C650 631.4 645.4 630.2 640 629.5C634.6 628.8 628.4 628.7 622.5 628C616.6 627.3 611.2 626.6 604.6 625.5C598 624.4 589.4 623.2 582.9 621.5C576.4 619.8 571.1 617.8 565.5 615.5C559.9 613.2 553.6 610 549 607.5C544.4 605 541.5 602.8 538 600.5C534.5 598.2 531.9 596.6 528.3 593.5C524.7 590.4 520.2 586.1 516.2 582C512.2 577.9 508.1 573.4 504.1 568.8C500.1 564.2 496.1 559.5 492.1 554.3C488.1 549.1 484.2 543.1 480 537.4C475.8 531.7 471 525.5 467 520C463 514.5 459.1 508.9 456 504.5C452.9 500.1 451.1 498.4 448.6 493.7C446.2 489 442.5 479.3 441.3 476.4L440 463Z" fill="#da97fd"/>
<path d="M494.6 384L507.5 396.5L499 400.4Z" fill="#7a6090"/>
<path d="M484.4 507.6C483.2 506.2 479.6 502.2 477.1 499C474.6 495.8 471.6 492.4 469.2 488.4C466.8 484.4 463.9 479.3 462.5 475.1C461.1 470.9 460.4 467.4 460.5 463.2C460.6 459 462.1 453.7 463.2 449.9C464.3 446.1 465.4 443.1 467.2 440.5C469 437.9 470.1 436.8 474 434C477.9 431.2 484.7 427.4 490.9 423.9C497.1 420.3 504.1 416.6 511.2 412.7C518.3 408.8 529.9 402.5 533.6 400.5L536.6 406.6L598.1 371L598.5 366C600.9 364.8 607.4 361.5 612.7 358.9C618 356.3 624 352.8 630.3 350.5C636.6 348.2 643.8 346.1 650.6 345.1C657.4 344.1 664.1 344 670.9 344.3C677.7 344.6 684.4 345.3 691.2 346.7C698 348.1 705.4 350.4 711.5 352.8C717.6 355.2 723.2 358.6 727.8 360.9C732.4 363.2 737 365.7 738.9 366.6C741.1 366.1 746.5 364.3 752.1 363.4C757.7 362.4 765.6 361.1 772.4 360.9C779.2 360.6 787.1 361.3 792.7 361.9C798.3 362.5 800.5 363.1 806 364.6C811.5 366.1 819 368.1 825.6 370.8C832.2 373.5 839.8 377 845.9 380.9C852 384.8 857.4 389.2 862.2 394.1C867.1 399 870.6 404.5 875 410.5C879.4 416.5 883.4 422.8 888.5 430C893.6 437.2 899.5 445.6 905.5 454C911.5 462.4 918.8 473.7 924.5 480.5C930.2 487.3 935.8 489.8 939.6 494.7C943.5 499.6 946.1 505.2 947.6 509.6C949.1 514 949.1 517.3 948.9 521.2C948.7 525.1 947.8 529.4 946.6 532.8C945.4 536.2 944 538.5 941.8 541.5C939.5 544.5 934.5 549.5 933.1 551.1C931.5 551.9 924.8 556.7 923.5 555.9C922.2 555.1 924.4 549.8 925.4 546.3C926.4 542.8 928.9 538.6 929.2 534.7C929.5 530.8 928.9 527 927.3 523.1C925.7 519.2 923.1 516 919.6 511.6C916.1 507.2 911.1 502.6 906.1 497C901.1 491.4 894.4 484.2 889.5 478C884.6 471.8 880.2 464.8 877 460C873.8 455.2 873.8 454.3 870.3 449C866.8 443.7 860.8 434.1 856.1 428C851.4 421.9 847 416.8 841.9 412.5C836.8 408.2 831.6 404.9 825.6 402C819.6 399.1 811.5 397 806 395.1C800.5 393.2 798.3 391.4 792.7 390.4C787.1 389.4 779.2 389 772.4 389.3C765.6 389.6 757 391.4 752.1 392.4C747.2 393.4 745.4 394.8 743 395.4C740.6 396 738.8 395.7 737.9 395.8C736.2 395.1 732.2 393.7 727.8 391.4C723.4 389.1 717.6 385 711.5 382.2C705.4 379.4 698 376.4 691.2 374.7C684.4 373 677.7 372.3 670.9 372.1C664.1 371.9 657.4 372.3 650.6 373.5C643.8 374.7 636.6 377.1 630.3 379.2C624 381.3 619 382.9 612.7 386C606.4 389.1 599.2 393.8 592.4 398C585.6 402.2 578.9 406.8 572.1 411C565.3 415.2 557.2 420.3 551.8 423.5C546.4 426.7 543.8 427.8 539.5 430C535.2 432.2 531.1 434.2 526.2 436.6C521.3 439 515.2 442.2 510.3 444.6C505.4 447 500.5 449 497 451.2C493.5 453.4 491 455.5 489.1 457.9C487.2 460.3 486.5 462.7 485.7 465.8C484.9 468.9 484.2 472.6 484.4 476.4C484.6 480.2 486.3 484.6 487.1 488.4C487.9 492.2 489.6 495.8 489.1 499C488.7 502.2 485.2 506.2 484.4 507.6Z" fill="url(#gFar)"/>
<path d="M463.2 449.9L460.5 463.2L462.5 475.1L469.2 488.4L477.1 499L475.8 492.4L468 475L464 458Z" fill="#76608c" fill-opacity="0.8"/>
<path d="M485.7 487C486.3 489 487.7 494.4 489.1 499C490.6 503.6 492.6 510 494.4 514.9C496.2 519.8 497.9 524.4 499.7 528.2C501.5 532.1 502.4 534.1 505 538C507.6 541.9 511.3 546.2 515.6 551.5C519.9 556.8 525 563.5 530.8 569.5C536.6 575.5 544.1 582.8 550.3 587.5C556.4 592.2 561.9 594.9 567.7 597.5C573.5 600.1 579 601.4 585.1 603C591.2 604.6 598.4 605.6 604.6 606.9C610.8 608.2 614.1 609.3 622.5 610.6C630.9 611.9 644.2 613.4 655 614.7C665.8 616.1 676.7 616.8 687.5 618.7C698.3 620.6 709.6 624.2 720 626C730.4 627.8 741.6 629 750 629.3C758.4 629.5 763.3 628.7 770.3 627.5C777.3 626.3 785.5 624.1 792 622C798.5 619.9 803.5 617.4 809.6 614.8C815.8 612.1 822.5 609.1 828.9 606.1C835.3 603.1 841.8 599.7 848.2 596.5C854.6 593.3 861.1 590.2 867.5 586.8C873.9 583.4 880 579.9 886.8 576.2C893.5 572.5 901.9 568 908 564.6C914.1 561.2 920.9 557.4 923.5 555.9L925.4 552.1C923.8 552.9 920.5 554.6 915.7 556.9C910.9 559.1 902.9 562.4 896.5 565.6C890.1 568.8 885.2 572 877.2 576.2C869.2 580.4 857.9 585.9 848.2 590.7C838.6 595.5 827.3 601.2 819.3 605.1C811.3 609 806.5 611.4 800 613.8C793.5 616.2 788.3 617.7 780 619.5C771.7 621.3 760 624.2 750 624.4C740 624.5 730.4 622.4 720 620.4C709.6 618.4 698.3 614.4 687.5 612.6C676.7 610.8 664.1 610.5 655 609.5C645.9 608.5 641.3 607.8 632.9 606.5C624.5 605.2 612.9 603.5 604.6 601.5C596.3 599.5 589.8 597.3 582.9 594.5C576 591.7 569.3 588.9 563.4 584.5C557.5 580.1 552 572.6 547.6 568C543.2 563.4 539.9 560.4 536.7 556.7C533.5 553 531.1 550 528.3 546C525.5 542 522.7 537.3 519.9 533C517.1 528.7 513.6 523.5 511.3 520C509 516.5 508.9 515.8 506.3 512.3C503.7 508.8 499.1 503.2 495.7 499C492.3 494.8 487.4 489 485.7 487Z" fill="url(#gNear)"/>
<path d="M510.2 366L562 335.5L567 334L572.1 335.5L572.1 341.6L568 341.5L564 343L512.2 373.1Z" fill="#ab7edd"/>
<path d="M572.1 335.5L598.5 366L598.1 371L572.1 341.6Z" fill="#78628d"/>
<path d="M501.2 464.3C504.4 465.1 514.1 468.3 520.2 469.2C526.4 470.1 533.5 472 538.1 469.9C542.8 467.8 546.4 458.7 548.1 456.5M545.2 469.2C547.4 469.5 555 473 558.2 470.8C561.4 468.6 563.4 458.3 564.4 455.8M566.7 471C570.1 470.7 580.1 470 587.2 469.2C594.4 468.4 605.5 468.7 609.6 466.3C613.7 463.9 610.7 455 611.8 454.7C612.9 454.4 612.2 462.8 616.3 464.7C620.4 466.6 628.8 465.4 636.4 465.8C644 466.2 657.7 466.8 662 467M605.1 451.3C608.5 450.2 618.5 446.7 625.2 444.6C631.9 442.6 639.7 440.3 645.3 439C650.9 437.7 656.5 437.2 658.7 436.8M674.3 414.5C673.6 418.2 671.6 430.9 669.9 436.8C668.2 442.7 666.2 447.9 664.3 449.8C662.4 451.7 659.6 448.3 658.7 448M674.3 435.7L690 437.3M697.8 439C697.4 440.5 696.8 446.6 695.5 448C694.2 449.4 690.9 447.6 690 447.5M662 462.5C664.4 464.2 670.3 469.4 676.6 472.5C682.9 475.6 696.1 479.6 700 481M499.7 476.6C502 479.8 508.4 488.9 513.5 496C518.6 503.1 526.5 515.9 530.3 519.4C534.1 522.9 535.3 517.6 536.3 517.2M590.6 496C592.3 498.4 596 505.1 600.6 510.5C605.2 515.9 615.5 525.4 618.5 528.4M641.3 516.1L637.5 530M705.6 417.9C704.5 422 701.1 437.4 698.9 442.4C696.7 447.4 693.3 447.1 692.2 448M704.5 437.5L720.2 440.2M733.6 417.4C733 421.6 731.7 436.9 730.2 442.4C728.7 447.9 726.1 449.4 724.6 450.3C723.1 451.2 721.8 448.4 721.3 448M734.7 440.9L748.1 446.5M760.4 428.6C759.8 432.8 758.3 448.4 757 453.6C755.7 458.8 754 459.2 752.5 459.9C751 460.6 748.8 458 748.1 457.6M762.6 449.1L776 454.7M787.6 446.5C787.1 449.9 786.1 462.8 784.9 467C783.7 471.2 782 471.1 780.5 471.5C779 471.9 776.8 470 776 469.7M790.5 460.8C793.5 462.6 802.5 467.3 808.4 471.5C814.3 475.7 822.9 483.6 825.8 486M690 477.7C693 478.6 700.4 482 707.9 483.1C715.4 484.2 726.2 484.7 734.7 484.4C743.2 484.1 755.1 482 759.2 481.5M759.2 483.1C762.6 484.3 772.4 488.1 779.3 490.5C786.2 492.9 795.1 497.4 800.6 497.2C806.1 497 810.4 490.6 812.4 489.3M809.5 501C812.7 502.6 822.5 507.8 828.5 510.6C834.5 513.4 840.6 518.8 845.2 517.9C849.9 517 854.5 507.1 856.4 505M870.9 510.6L868.7 518.4M516.8 500C519.2 503.2 528.1 516.2 531.3 519C534.5 521.8 535.4 517.2 536.2 516.8M537.5 529C540.4 532.4 551 546.3 554.7 549.1C558.4 551.9 559 546.3 559.9 545.8M558.5 553.6C560.7 555.8 566.9 563.3 571.5 567C576.1 570.7 581.2 575.9 586 575.9C590.8 575.9 598.1 568.5 600.5 567M596 579.3C599.4 580.4 609.8 584.4 616.1 586C622.4 587.6 628.3 588.3 634 588.9C639.7 589.5 645.2 592.7 650.1 589.8C655 586.9 660.9 574.5 663.1 571.5M592.7 501.1C595.1 504.1 601.9 513.4 607.2 519C612.5 524.6 621.7 532 624.6 534.6M641.8 516.8C640.5 520.9 636.4 535.3 634 541.3C631.6 547.2 629.2 550.9 627.3 552.5C625.4 554.1 623.2 551.2 622.4 550.9M636.7 541.3L651.9 549.6M668.6 529.5C667.3 533.9 663 549.8 660.8 555.8C658.6 561.8 657 564 655.2 565.2C653.4 566.4 651 563.4 650.1 563M666.4 554.1L678.7 557.6M699.9 538C698.2 542.1 692.9 556.7 689.9 562.5C686.9 568.3 684 571.3 682 572.6C680 573.9 678.3 570.8 677.6 570.4M696.6 560.3L707.7 562.5M720 562.5C719.1 564.2 716.3 571.3 714.4 572.6C712.5 573.9 709.7 570.8 708.8 570.4M694.3 577.1C693.6 580.1 695.8 592.8 689.9 594.9C684 597 663.8 590.8 658.6 590M696.6 597.2L720 603.9M829.6 511.2C832.4 512.3 841.9 518.9 846.3 517.9C850.7 516.9 854.3 507.1 855.9 504.9M853.7 520.5C855.8 521.1 863.5 525.6 866.4 524.1C869.3 522.6 869.9 511.5 870.9 511.2C871.9 510.9 872.1 520.4 872.4 522.3M873.1 526.4C875.9 527 883.2 529 889.9 530.2C896.6 531.4 909.4 533 913.3 533.5M760.3 558.5C763.3 557.5 771.9 555 778.2 552.5C784.5 550 792.5 546.8 798.3 543.6C804.1 540.4 810.4 535.2 812.8 533.5M730.8 538.4C729.2 542.4 723.9 556.8 721.2 562.5C718.5 568.2 716.5 571.4 714.5 572.6C712.5 573.8 709.8 570.2 708.9 569.7M725.7 562.5L741.3 562.1M763.7 537.5C762 541.5 756.4 555.8 753.6 561.4C750.8 567 748.8 569.8 746.9 571C745 572.2 743.1 569.2 742.4 568.8M700 599.4C703 600.2 712.1 603.6 717.9 604.5C723.7 605.4 731.5 605.8 734.6 605C737.7 604.2 736.2 600.8 736.5 600M736.2 594.9C737.2 596.9 738.8 604.7 742.4 606.8C746 608.9 753.2 608.1 758.1 607.7C763 607.3 769.1 605.7 771.5 604.5C773.9 603.3 772.4 601.2 772.6 600.5M773.3 594.3C774.1 595.9 774.8 602.9 778.2 603.9C781.6 604.9 788.8 602.2 793.8 600.5C798.8 598.8 805.7 596.2 808.3 593.8C810.9 591.4 808.5 586.5 809.4 586C810.3 585.5 809.8 591.5 813.9 591.1C818 590.7 826.9 587.1 834 583.8C841.1 580.5 848.4 576 856.4 571.5C864.4 567 873.9 561.2 882 557C890.1 552.8 901.2 547.8 905 546" fill="none" stroke="#9270b3" stroke-width="1.45" stroke-linecap="round" stroke-linejoin="round"/>
<path d="M440 463C440.2 462.5 440.3 462.8 441.2 460C442.1 457.2 443.3 450.9 445.2 446.2C447.1 441.5 449.1 436.4 452.3 432C455.5 427.6 459.8 423.5 464.5 419.8C469.2 416.1 475.1 412.9 480.8 409.6C486.6 406.3 496 401.5 499 399.9C498.3 397.8 496.4 391.4 495 387.3C493.6 383.2 491.6 378.5 490.9 375.1C490.1 371.7 490 369.5 490.5 367C491 364.5 492.2 362.1 494 359.9C495.8 357.7 496.5 356.9 501.1 353.8C505.7 350.8 514.6 345.7 521.4 341.6C528.2 337.5 536.3 332.6 541.7 329.4C547.1 326.2 550.5 324 553.9 322.3C557.3 320.6 558.3 319.8 562 319.3C565.7 318.8 572.5 318.5 576.2 319.3C579.9 320.1 581.2 321.9 584.3 324.4C587.3 326.9 591.3 331.3 594.5 334.5C597.7 337.7 602.1 342.2 603.6 343.7C605.8 343 612.3 341.1 616.8 339.6C621.2 338.1 624.7 336.1 630.3 334.5C635.9 332.9 643.8 330.9 650.6 330C657.4 329.1 664.1 329.1 670.9 329.4C677.7 329.6 684.4 330.1 691.2 331.5C698 332.9 704.7 335.2 711.5 337.6C718.3 340 726.2 343.3 731.8 345.7C737.4 348.1 742.8 350.8 745 351.8C746.9 351.3 751.6 349.5 756.2 348.7C760.8 347.9 766.3 347.3 772.4 347.1C778.5 346.9 787.2 347.2 792.7 347.7C798.2 348.2 799.8 348.7 805.3 350C810.8 351.3 818.8 353.2 825.6 355.5C832.4 357.8 839.8 360.6 845.9 363.7C852 366.8 857.1 370.1 862.2 373.8C867.3 377.5 871.7 381.3 876.4 386C881.1 390.7 885.5 395.6 890.6 402.2C895.7 408.8 900.7 417.3 906.8 425.6C912.9 433.9 920.5 443.7 927.1 452C933.7 460.3 940.8 468.8 946.1 475.2C951.4 481.6 956.1 486.3 959.1 490.4C962.1 494.5 962.5 496.5 964 500C965.5 503.5 967 506.8 967.8 511.6C968.6 516.4 969 522.8 968.8 528.9C968.5 535 966.9 540.8 966.3 548.2C965.6 555.6 965.3 565.9 964.9 573.3C964.5 580.7 964.8 586.8 964 592.6C963.2 598.4 962 603.2 960.1 608C958.2 612.8 955.9 617 952.4 621.5C948.9 626 944.4 630.8 938.9 635C933.4 639.2 927 642.4 919.6 646.6C912.2 650.8 902.8 655.4 894.5 660C886.2 664.6 878.3 669.4 870 674C861.7 678.6 852.3 684 844.7 687.5C837.1 691 831.6 692.7 824.6 695.3C817.6 697.9 810.1 700.7 802.9 702.9C795.6 705.1 788.4 706.9 781.1 708.3C773.9 709.7 766.6 710.7 759.4 711.1C752.2 711.5 744.9 711.1 737.7 710.5C730.5 709.9 723.2 708.7 716 707.2C708.8 705.8 697.9 702.7 694.3 701.8" fill="none" stroke="#2a76ff" stroke-width="3.5" stroke-linejoin="round" stroke-linecap="butt"/>
<path d="M605.7 687.2C603.4 686.7 596.1 685.5 591.6 684C587.1 682.5 583.7 680.9 578.6 678.5C573.5 676.1 567 673.4 561.2 669.8C555.4 666.2 549.2 661.5 543.8 656.8C538.4 652.1 533.7 647.4 528.6 641.6C523.5 635.8 518.5 629.3 513.4 622.1C508.3 614.9 503.3 605.8 498.2 598.2C493.1 590.6 487.7 583.2 483 576.5C478.3 569.8 473.4 564.1 470 558C466.6 551.9 464.9 546.3 462.5 540C460.1 533.7 457.9 526.2 455.9 520.2C453.9 514.2 452.4 509.4 450.6 504.3C448.8 499.2 446.9 494.4 445.3 489.7C443.8 485 442.2 480.8 441.3 476.4C440.4 471.9 440.2 465.2 440 463" fill="none" stroke="#2a76ff" stroke-width="3.5" stroke-linejoin="round" stroke-linecap="butt"/>
<path d="M694.3 701.8C690.2 701 678.4 698.7 670 697C661.6 695.3 651.7 692.9 643.7 691.6C635.7 690.3 628.3 690.1 622 689.4C615.7 688.7 608.4 687.6 605.7 687.2" fill="none" stroke="#6b6b6b" stroke-width="1.6"/>
<path d="M695.8 414.8L706.8 499.3" stroke="#196ef0" stroke-width="2"/>
<path d="M721 515.6L883.5 542.5" stroke="#da1e28" stroke-width="1.6"/>
<path d="M708 526L661.7 665" stroke="#24a237" stroke-width="1.6"/>
<path d="M684.9 384.9L705.8 387.9L706.8 400.8L701.8 415.8L682.9 412.8L680.3 398.9Z" fill="#196ef0"/>
<path d="M701.8 499.3L719.7 502.2L720.7 512.2L716.7 527.1L698.8 524.5L696.8 514.2Z" fill="#fff"/>
<path d="M886 530.4L904.9 533.1L904 544.4L901.8 558.7L895.5 558.7L882.4 556.5L882.4 545.6L884.5 537Z" fill="#da1e28"/>
<path d="M649.8 662.7L668.2 666L670.8 674.6L666.1 692L647.6 689.8L644.3 679Z" fill="#24a237"/>
<g id="viewicons">
<g transform="translate(17.5,792)"><path d="M12.2 1.5L22.8 7.2V19.3L12.2 25L1.6 19.3V7.2Z M1.6 7.2L12.2 13L22.8 7.2M12.2 13V25" fill="none" stroke="#666" stroke-width="2.3" stroke-linejoin="round"/></g>
<g transform="translate(57.5,792)"><path d="M2 7.5L7 2.2H22.2V18L17 23.8H2Z" fill="none" stroke="#666" stroke-width="2.2" stroke-linejoin="round"/><path d="M2 7.5H17V23.8H2Z" fill="#666"/><path d="M17 7.5L22.2 2.2" stroke="#666" stroke-width="1.5"/></g>
<g transform="translate(97.5,792)"><path d="M2 7.5L7 2.2H22.2V18L17 23.8H2Z" fill="none" stroke="#666" stroke-width="2.2" stroke-linejoin="round"/><path d="M2 7.5L7 2.2H22.2L17 7.5Z" fill="#666" stroke="#666" stroke-width="1.5" stroke-linejoin="round"/><path d="M17 7.5V23.8" stroke="#666" stroke-width="2"/></g>
<g transform="translate(137.5,792)"><path d="M22.2 7.5L17 2.2H2V18L7 23.8H22.2Z" fill="none" stroke="#666" stroke-width="2.2" stroke-linejoin="round"/><path d="M2 2.2L7 7.5V23.8L2 18Z" fill="#666" stroke="#666" stroke-width="1.5" stroke-linejoin="round"/><path d="M7 7.5H22.2M7 7.5L2 2.2" stroke="#666" stroke-width="1.8"/></g>
<g transform="translate(177.5,792)"><path d="M2 7.5L7 2.2H22.2V18L17 23.8H2Z" fill="none" stroke="#666" stroke-width="2.2" stroke-linejoin="round"/><path d="M17 7.5L22.2 2.2V18L17 23.8Z" fill="#666" stroke="#666" stroke-width="1.5" stroke-linejoin="round"/><path d="M2 7.5H17" stroke="#666" stroke-width="1.8"/></g>
</g>
<path d="M16.3 694L21.3 689L26.3 694" fill="none" stroke="#666" stroke-width="1.4"/>
<path d="M20.6 734.4L32.2 722.8" stroke="#666" stroke-width="3.4"/>
<path d="M16 737.6H33.8" stroke="#666" stroke-width="1.4"/>
</svg>
<div id="stl"><svg width="91" height="98" viewBox="0 0 91 98">
<path d="M15 -3H55L82 26V87Q82 93 76 93H13Q7 93 7 87V5Q7 -3 15 -3Z" fill="#3f48cc"/>
<path d="M57.5 -3L85 25.5V-3Z" fill="#fff"/>
<path d="M54.1 -3V20Q54.1 28.8 63 28.8H84" fill="none" stroke="#fff" stroke-width="4.7"/>
<path d="M-3 9.3H35.5Q41.3 9.3 41.3 15V36.7Q41.3 42.5 35.5 42.5H-3Z" fill="#fff"/>
<path d="M-3 13.4H34.2Q37.2 13.4 37.2 16.4V34.8Q37.2 37.8 34.2 37.8H-3Z" fill="#3f48cc"/>
<rect x="19.9" y="46.8" width="49.1" height="4.9" fill="#fff"/>
<rect x="19.9" y="61.6" width="49.1" height="4.6" fill="#fff"/>
<rect x="19.9" y="76" width="49.1" height="4.8" fill="#fff"/>
<text x="1.2" y="31.2" font-family="Liberation Sans, sans-serif" font-weight="700" font-size="13.6" fill="#fff" textLength="24" lengthAdjust="spacingAndGlyphs">STL</text>
</svg></div>
<svg id="arrow" width="15" height="29" viewBox="0 0 15 29"><path d="M14.5 1L0.8 14.5L14.5 28" fill="#fff" stroke="#bdbebf" stroke-width="1.25"/></svg>
<div id="panel">
<span class="ax" style="top:25px;color:#da1e28">X</span>
<span class="ax" style="top:67px;color:#24a237">Y</span>
<span class="ax" style="top:107px;color:#196ef0">Z</span>
<div class="fld a" style="left:33px;top:16px;width:179px;height:33px"><span class="v">111.3857</span><span class="u">mm</span></div><div class="fld a" style="left:220px;top:16px;width:179px;height:33px"><span class="v">100</span><span class="u">%</span></div>
<div class="fld" style="left:33px;top:57px;width:179px;height:33px"><span class="v">75.0893</span><span class="u">mm</span></div><div class="fld" style="left:220px;top:57px;width:179px;height:33px"><span class="v">100</span><span class="u">%</span></div>
<div class="fld" style="left:33px;top:99px;width:179px;height:32px"><span class="v" style="top:9px">26</span><span class="u" style="top:8px">mm</span></div><div class="fld" style="left:220px;top:99px;width:179px;height:32px"><span class="v" style="top:9px">100</span><span class="u" style="top:8px">%</span></div>
<svg style="position:absolute;left:46px;top:161px" width="40" height="44" viewBox="60 408 40 44">
<path d="M68.9 430.6A9.9 9.9 0 1 0 78.6 419.9H69.4" fill="none" stroke="#08073f" stroke-width="2.8" stroke-linecap="round"/>
<path d="M74.9 414.5L69.3 420L74.9 425.6" fill="none" stroke="#08073f" stroke-width="2.8" stroke-linecap="round" stroke-linejoin="round"/>
</svg>
<div class="cb" style="top:151px"></div><span class="cl" style="top:155px;letter-spacing:-.11px">Snap Scaling</span>
<div class="cb" style="top:188px"></div><span class="cl" style="top:192px;letter-spacing:.27px">Uniform Scaling</span>
</div>
<span class="sc" style="left:46px;top:685px;letter-spacing:.26px">Object list</span>
<span class="sc" style="left:54px;top:722px;letter-spacing:-.27px">STL1447</span>
<span class="sc" style="left:14px;top:755px;letter-spacing:.12px">111.4 x 75.1 x 26.0 mm</span>
</body></html>
